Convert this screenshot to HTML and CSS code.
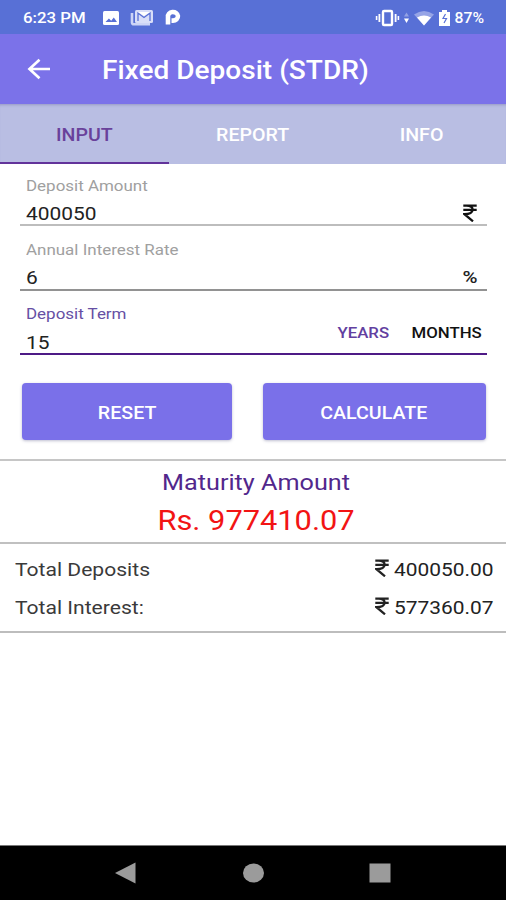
FILE: index.html
```html
<!DOCTYPE html>
<html lang="en">
<head>
<meta charset="utf-8">
<title>Fixed Deposit (STDR)</title>
<link rel="stylesheet" href="styles.css">
</head>
<body>
<svg class="defs" width="0" height="0">
  <symbol id="rupee" viewBox="0 0 14 18">
    <path d="M.3 1.6h13.4M.3 5.8h13.4M3.5 1.6C12 1.6 12 10.2 1.500 10.200L10 17.300" fill="none" stroke="currentColor" stroke-width="2.300"/>
  </symbol>
</svg>
<div class="screen">
  <header class="status">
    <span class="t time">6:23 PM</span>
    <svg class="left-icons" width="80" height="18" viewBox="0 0 80 18">
      <rect x="1" y="2" width="16" height="14" rx="1.5" fill="#fff"/>
      <path d="M3.5 13l3.4-3.500 2.300 2.200L11.800 8.500l3.200 4.500z" fill="#5970d6"/>
      <path d="M30 4v9.500q0 1.800 2 1.800h16" fill="none" stroke="#cdd4f6" stroke-width="2.600"/>
      <rect x="33" y="1" width="18" height="13" rx="1.5" fill="#d9def8"/>
      <path d="M36 12V4l6 4.400L48 4v8" fill="none" stroke="#5970d6" stroke-width="1.300"/>
      <path d="M36 3h12l-6 4z" fill="#fff"/>
      <path d="M66 15.500V8a5 4.300 0 1 1 5 3.600h-1.500" fill="none" stroke="#fff" stroke-width="4.600"/>
    </svg>
    <svg class="right-icons" width="76" height="18" viewBox="0 0 76 18">
      <rect x="8" y="2" width="9" height="14" rx="1" fill="none" stroke="#fff" stroke-width="2.400"/>
      <path d="M4.400 5v8M20.600 5v8" stroke="#fff" stroke-width="1.800"/>
      <path d="M1.600 7v4M23.400 7v4" stroke="#fff" stroke-width="1.600"/>
      <path d="M29 7.500l2.500-4 2.500 4z" fill="#93a2e4"/>
      <path d="M29 9.500l2.500 4.500 2.500-4.500z" fill="#fff"/>
      <path d="M39 5.500Q49 -1.500 59 5.500L49 16.500z" fill="#96a4e6"/>
      <path d="M42 8.500Q49 4.500 56 8.500L49 16.500z" fill="#fff"/>
      <path d="M64 3h3V1h5v2h3v14H64z" fill="#fff"/>
      <path d="M70.500 5l-2.500 4.500h3.500l-2.500 4.500" fill="none" stroke="#5970d6" stroke-width="1.200"/>
    </svg>
    <span class="t battery">87%</span>
  </header>

  <div class="appbar">
    <svg class="back" width="24" height="22" viewBox="0 0 24 22">
      <path d="M12.500 1.800L2.500 11l10 9.200M2.500 11H23" fill="none" stroke="#fff" stroke-width="2.700"/>
    </svg>
    <h1 class="t title">Fixed Deposit (STDR)</h1>
  </div>

  <nav class="tabs">
    <div class="tab active"><span class="t tab-input">INPUT</span></div>
    <div class="tab"><span class="t tab-report">REPORT</span></div>
    <div class="tab"><span class="t tab-info">INFO</span></div>
  </nav>

  <main>
    <section class="form">
      <div class="field amount">
        <label class="t label l-amount">Deposit Amount</label>
        <div class="row"><span class="t value v-amount">400050</span><svg class="unit" width="14" height="18"><use href="#rupee"/></svg></div>
      </div>
      <div class="field rate">
        <label class="t label l-rate">Annual Interest Rate</label>
        <div class="row"><span class="t value v-rate">6</span><span class="t percent">%</span></div>
      </div>
      <div class="field term">
        <div class="term-main">
          <label class="t label l-term">Deposit Term</label>
          <div class="row"><span class="t value v-term">15</span></div>
        </div>
        <div class="periods">
          <span class="t years">YEARS</span>
          <span class="t months">MONTHS</span>
        </div>
      </div>
      <div class="buttons">
        <button class="btn"><span class="t b-reset">RESET</span></button>
        <button class="btn"><span class="t b-calc">CALCULATE</span></button>
      </div>
    </section>

    <section class="maturity">
      <div class="t m-title">Maturity Amount</div>
      <div class="t m-value">Rs. 977410.07</div>
    </section>

    <section class="totals">
      <div class="total"><span class="t name n-dep">Total Deposits</span><span class="sum"><svg width="14" height="18"><use href="#rupee"/></svg><span class="t num">400050.00</span></span></div>
      <div class="total"><span class="t name n-int">Total Interest:</span><span class="sum"><svg width="14" height="18"><use href="#rupee"/></svg><span class="t num">577360.07</span></span></div>
    </section>
  </main>

  <footer class="navbar">
    <svg width="22" height="22" viewBox="0 0 22 22"><path d="M0 11L20.500 .500v21z"/></svg>
    <svg width="22" height="22" viewBox="0 0 22 22"><ellipse cx="11.500" cy="11" rx="10.500" ry="9.500"/></svg>
    <svg width="22" height="22" viewBox="0 0 22 22"><rect x=".500" y="1.500" width="21" height="19"/></svg>
  </footer>
</div>
</body>
</html>
```
FILE: styles.css
```css
* { box-sizing: border-box; }
body { margin: 0; background: #fff; font-family: Roboto, "Liberation Sans", sans-serif; }
.defs { display: block; }
.screen { width: 506px; height: 900px; display: flex; flex-direction: column; overflow: hidden; }
svg { display: block; flex: none; }

/* Wide lettering: glyphs are stretched from their anchored edge */
.t { display: block; width: max-content; white-space: nowrap; transform: scaleX(1.12); transform-origin: left center; }

.status { height: 34px; flex: none; background: #5870d6; color: #fff; display: flex; align-items: center; padding: 1px 22px 0 23px; font-size: 15px; font-weight: 500; }
.time { width: 79px; }
.right-icons { margin-left: auto; margin-right: 5px; }
.battery { transform-origin: right center; transform: scaleX(1.05); }

.appbar { height: 70px; flex: none; background: #7b72e9; color: #fff; display: flex; align-items: center; padding-left: 27px; }
.back { margin-right: 51px; }
.title { margin: 2px 0 0; font-size: 25.5px; line-height: 30px; font-weight: 500; transform: scaleX(1.1); }

.tabs { height: 60px; flex: none; background: #b9bee3; box-shadow: inset 0 3px 3px -2px #9698c4; display: grid; grid-template-columns: repeat(3, 1fr); color: #fff; font-size: 17.5px; font-weight: 500; }
.tab { display: flex; align-items: center; justify-content: center; padding-top: 4px; border-bottom: 2px solid transparent; }
.tab .t { transform-origin: center; }
.tab.active { color: #69419b; border-bottom-color: #62339a; }

main { flex: 1; }
.form { padding: 0 19px 0 20px; height: 295px; }
.field { padding: 15px 5px 0 6px; }
.amount { padding-top: 13px; border-bottom: 2px solid #bdbdbd; }
.rate { border-bottom: 2px solid #929292; }
.term { border-bottom: 2px solid #4e1a86; display: flex; justify-content: space-between; padding-top: 14px; }
.label { font-size: 15px; line-height: 18px; color: #a0a0a0; transform: scaleX(1.13); }
.l-term { color: #6650a4; }
.row { display: flex; justify-content: space-between; height: 30px; padding-top: 9px; }
.amount .row { height: 29px; padding-top: 8px; }
.rate .row { padding-top: 8px; }
.value { font-size: 19px; line-height: 22px; color: #222; transform: scaleX(1.1); }
.unit { margin: 1px 5px 0 0; color: #111; }
.percent { font-size: 17px; line-height: 21px; margin-right: 4px; transform-origin: right center; color: #222; font-weight: 500; transform: scaleX(1.2); }
.periods { display: flex; gap: 30px; padding-top: 19px; font-size: 15px; line-height: 18px; font-weight: 500; }
.periods .t { transform-origin: right center; }
.years { color: #6240a0; }
.months { color: #111; }

.buttons { display: grid; grid-template-columns: 210.5px 223px; gap: 30.5px; padding: 28px 0 0 1.5px; }
.btn { height: 57px; border: 0; border-radius: 4px; background: #7a70e9; color: #fff; font: 500 17.5px/20px Roboto, sans-serif; display: flex; align-items: center; justify-content: center; padding: 2px 0 0; box-shadow: 0 1px 3px rgba(70, 70, 120, .35); }
.btn .t { transform-origin: center; }

.maturity { height: 85px; border-top: 2px solid #c6c6c6; border-bottom: 2px solid #c0c0c0; display: flex; flex-direction: column; align-items: center; padding: 8px 0 0 7px; }
.maturity .t { transform-origin: center; }
.m-title { font-size: 22px; line-height: 28px; color: #52278c; transform: scaleX(1.145); }
.m-value { font-size: 27.5px; line-height: 32px; margin-top: 8px; color: #f21414; }

.totals { height: 89px; border-bottom: 2px solid #bdbdbd; padding: 6px 13px 0 15px; }
.total { height: 38px; display: flex; align-items: center; justify-content: space-between; font-size: 19px; color: #3a3a3a; }
.name { transform: scaleX(1.11); }
.sum { display: flex; align-items: center; justify-content: space-between; width: 118px; color: #222; }
.num { transform-origin: right center; transform: scaleX(1.1); }
.sum svg { margin-top: -2px; }

.navbar { height: 55px; flex: none; background: #000; border-top: 1px solid #777; display: grid; grid-template-columns: 22px 22px 22px; column-gap: 105px; justify-content: center; align-items: center; fill: #9b9b9b; }
```
